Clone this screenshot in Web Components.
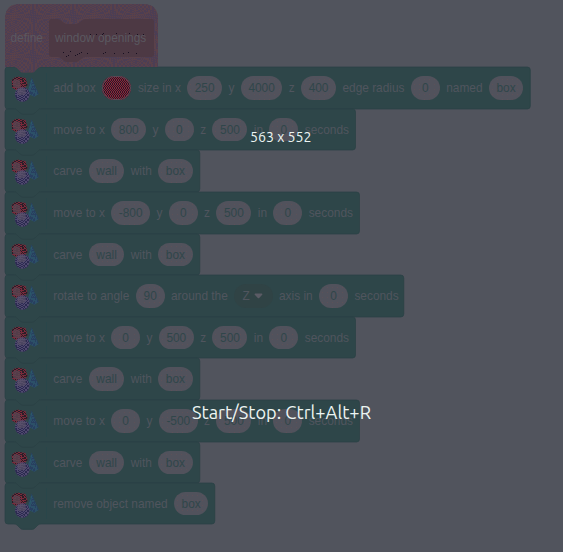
<!DOCTYPE html>
<html lang="en"><head><meta charset="utf-8"><title>Block script</title>
<style>html,body{margin:0;width:563px;height:552px;overflow:hidden;background:#51545d}</style></head>
<body><script-stage></script-stage>
<script>
const define=(name,html,setup)=>{
  const t=document.createElement('template');t.innerHTML=html;
  customElements.define(name,class extends HTMLElement{
    constructor(){super();this.attachShadow({mode:'open'}).append(t.content.cloneNode(true));}
    connectedCallback(){if(setup)setup(this,this.shadowRoot);}
  });
};
// One-pixel checker dots whose parity flips between scattered cells, or every few rows when regular.
const dots=(w,h,regular)=>{let d='';for(let y=0;y<h;y++)for(let x=0;x<w;x++){const flip=regular?Math.floor(y/4):((x>>1)*7+(y>>1)*13+(x*y>>3))%5<2?1:0;if((x+y+flip)%2===0)d+=`M${x} ${y}h1v1h-1z`;}return d;};
const dithered=(id,shape,w,h,a,b,regular)=>`<clipPath id="${id}">${shape}</clipPath><g clip-path="url(#${id})"><path fill="${a}" d="M0 0h${w}v${h}H0z"/><path shape-rendering="crispEdges" fill="${b}" d="${dots(w,h,regular)}"/></g>`;
const hat='<path d="M0 15Q0 0 15 0H138Q153 0 153 15V63H36Q34 63 33 64L30 67Q29 68.5 27 68.5H18Q16 68.5 15 67L12 64Q11 63 9 63H0Z"/>';
define('value-pill',`<style>
:host{display:flex;box-sizing:border-box;align-items:center;justify-content:center;height:23.6px;min-width:29px;padding:0 7.6px;border-radius:12px;color:#30464a;
background:radial-gradient(circle,#5c5158 .6px,transparent .8px) 1px 1px/5px 5px,#51525c}
</style><slot></slot>`);
define('color-swatch',`<style>:host{display:block;width:29.6px;height:24px}svg{display:block}</style>
<svg width="30" height="24">${dithered('c','<rect width="29" height="24" rx="12"/>',30,24,'#922039','#241f28',true)}<rect x=".5" y=".5" width="28" height="23" rx="11.5" fill="none" stroke="#5a4855"/></svg>`);
define('axis-menu',`<style>
:host{display:flex;box-sizing:border-box;align-items:center;justify-content:space-between;height:23.6px;width:38.5px;padding:0 9.3px 0 8.3px;border-radius:12px;background:#304345}
svg{display:block}</style><slot></slot><svg width="9" height="6" viewBox="0 0 9 6"><path d="M1.2.6h6.6q1 .3.4 1.2L5.2 5q-.7.6-1.4 0L.8 1.8Q.2.9 1.2.6Z" fill="#5b5b65"/></svg>`);
define('solids-icon',`<style>:host{display:block;width:28px;height:27px}svg{display:block}</style>
<svg width="28" height="27" viewBox="0 0 28 27">
${dithered('b','<path d="M20.5 1.5l7.2 16.5-4.2 2.8L16 17.5Z"/>',28,27,'#2c5068','#283f60')}<path d="M20.8 3.5L18 17" stroke="#2a5a6c"/>
${dithered('r','<path d="M.8 4.2Q3 1 7 .8L14.5 2 16.5 9 12 14 6 14.5 1 11.5Z"/>',28,27,'#7c2a3b','#2a1e27')}<path d="M2 4.5L5 3l4 1.5.5 6.5-3 1.5L2 10.5Z" fill="#5a4350" opacity=".85"/>
${dithered('p','<circle cx="11.3" cy="18.5" r="7.3"/>',28,27,'#50496f','#2b2a50')}<ellipse cx="10.5" cy="15.7" rx="4.3" ry="3.6" fill="#5b5368" opacity=".7"/></svg>`);
define('stack-block',`<style>
:host{display:flex;box-sizing:border-box;position:relative;height:var(--h);width:var(--w);align-items:center;padding-left:6px;color:#50555e;white-space:nowrap}
.shape{position:absolute;left:0;top:0;overflow:visible}
solids-icon{position:relative;align-self:flex-start;margin-top:9px;flex:none}
.rule{position:relative;width:1px;height:31px;background:#29464a;margin:0 6.8px 0 6.5px;flex:none}
.parts{position:relative;display:flex;align-items:center;gap:6.33px}</style>
<svg class="shape" height="48"><path fill="#2e4649" stroke="#294145" stroke-width=".7"/></svg>
<solids-icon></solids-icon><div class="rule"></div><div class="parts"><slot></slot></div>`,(el,root)=>{
  const w=+el.getAttribute('w'),h=+el.getAttribute('h');el.style.setProperty('--w',w+'px');el.style.setProperty('--h',h+'px');
  const s=root.querySelector('.shape');s.setAttribute('width',w);
  s.firstElementChild.setAttribute('d',`M0 3Q0 0 3 0H9Q11 0 12 1L15 4Q16 5.5 18 5.5H27Q29 5.5 30 4L33 1Q34 0 36 0H${w-3}Q${w} 0 ${w} 3V${h-3}Q${w} ${h} ${w-3} ${h}H36Q34 ${h} 33 ${h+1}L30 ${h+4}Q29 ${h+5.4} 27 ${h+5.4}H18Q16 ${h+5.4} 15 ${h+4}L12 ${h+1}Q11 ${h} 9 ${h}H3Q0 ${h} 0 ${h-3}Z`);
});
define('define-hat',`<style>
:host{display:flex;box-sizing:border-box;width:153px;height:63px;padding:4px 4px 0 5.5px;align-items:center;justify-content:space-between;color:#5a5860;position:relative}
.proto{position:relative;display:flex;box-sizing:border-box;align-items:center;width:105px;height:38px;padding-left:6px}
svg{position:absolute;left:0;top:0;overflow:visible}span{position:relative}</style>
<svg width="153" height="69">${dithered('h',hat,153,69,'#5a414a','#4c3e54')}</svg>
<span><slot name="word"></slot></span><div class="proto"><svg width="105" height="45"><path fill="#4d3944" d="M3 0H8Q11 0 14 3Q16 5 18 5H27Q29 5 31 3Q34 0 37 0H102Q105 0 105 3V35Q105 38 102 38H36Q34 38 31 41Q29 43 27 43H18Q16 43 14 41Q11 38 9 38H3Q0 38 0 35V3Q0 0 3 0Z"/>
<path fill="#170f20" shape-rendering="crispEdges" d="M41 15h1v1h-1zM47 15h1v1h-1zM53 15h1v1h-1zM54 14h1v1h-1zM67 14h1v1h-1zM80 14h1v1h-1zM88 15h1v1h-1zM94 15h1v1h-1zM14 33h1v1h-1zM17 37h1v1h-1zM19 36h1v1h-1zM21 32h1v1h-1zM26 36h1v1h-1zM28 35h1v1h-1zM30 34h1v1h-1zM32 33h1v1h-1zM38 34h1v1h-1zM54 34h1v1h-1zM56 33h1v1h-1zM65 34h1v1h-1zM74 34h1v1h-1zM79 33h1v1h-1zM87 34h1v1h-1z"/></svg><span><slot></slot></span></div>`);
define('overlay-caption',`<style>:host{display:block;position:absolute}svg{display:block;overflow:visible}text{font-family:Ubuntu,"Noto Sans","Open Sans",sans-serif;fill:#edf5f2}</style><svg><text lengthAdjust="spacingAndGlyphs"></text></svg>`,(el,root)=>{
  const t=root.querySelector('text'),s=root.querySelector('svg'),w=el.getAttribute('w'),f=+el.getAttribute('size');
  s.setAttribute('width',w);s.setAttribute('height',Math.ceil(f*1.4));t.setAttribute('y',f);t.setAttribute('textLength',w);t.setAttribute('font-size',f);t.textContent=el.getAttribute('label');
});
const value=v=>`<value-pill>${v}</value-pill>`,word=v=>`<span>${v}</span>`;
const tops=[67,109,150,192,234,275,317,358,400,442,483,524];let row=0;
const block=(w,...parts)=>{const h=tops[row+1]-tops[row];row++;return `<stack-block w="${w}" h="${h}">${parts.join('')}</stack-block>`;};
const move=(w,x,y)=>block(w,word('move to x'),value(x),word('y'),value(y),word('z'),value(500),word('in'),value(0),word('seconds'));
const carve=()=>block(194.8,word('carve'),value('wall'),word('with'),value('box'));
define('script-stage',`<style>
:host{display:block;position:relative;box-sizing:border-box;width:563px;height:552px;padding:4px 0 0 5px;overflow:hidden;background:#51545d;font:11.9px/16px "Liberation Sans",Arial,sans-serif}
.stack{display:flex;flex-direction:column;align-items:flex-start}
define-hat{z-index:1}
.size{left:250px;top:128px}.keys{left:192px;top:401px}</style>
<div class="stack"><define-hat><span slot="word">define</span>window openings</define-hat>
${block(525.3,word('add box'),'<color-swatch></color-swatch>',word('size in x'),value(250),word('y'),value(4000),word('z'),value(400),word('edge radius'),value(0),word('named'),value('box'))}
${move(350.5,800,0)}${carve()}${move(354.5,-800,0)}${carve()}
${block(398.8,word('rotate to angle'),value(90),word('around the'),'<axis-menu>Z</axis-menu>',word('axis in'),value(0),word('seconds'))}
${move(350.5,0,500)}${carve()}${move(354.5,0,-500)}${carve()}
${block(209.8,word('remove object named'),value('box'))}</div>
<overlay-caption class="size" label="563 x 552" w="61.5" size="14"></overlay-caption>
<overlay-caption class="keys" label="Start/Stop: Ctrl+Alt+R" w="179" size="18.2"></overlay-caption>`);
</script></body></html>
